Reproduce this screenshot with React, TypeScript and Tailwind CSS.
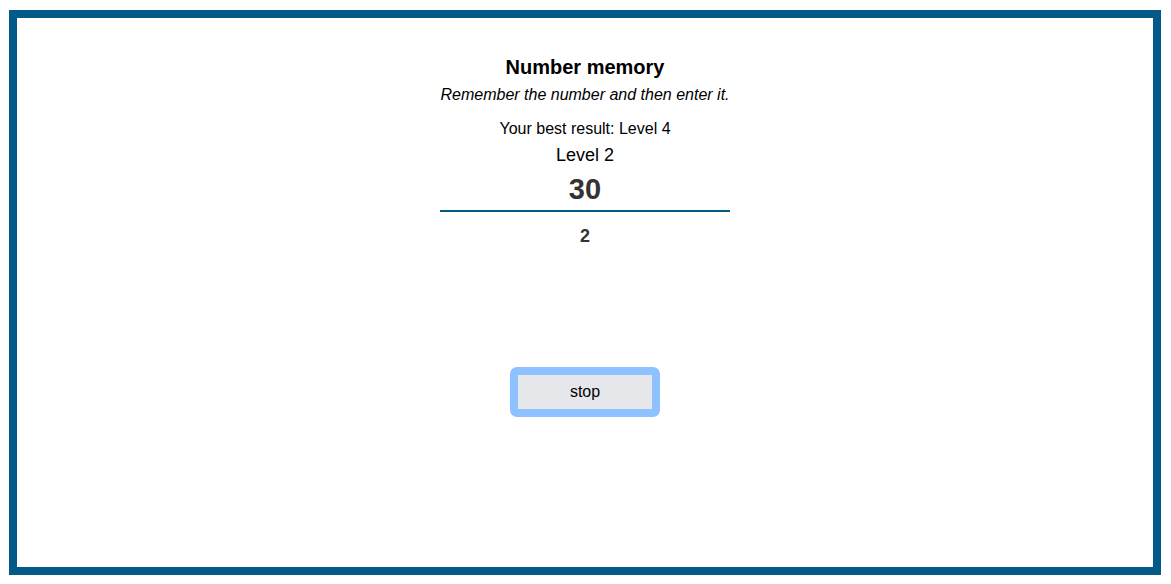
export default function App() {
  return (
    <div className="w-[1171px] h-[584px] bg-white pt-[10px] pl-[9px]" style={{ fontFamily: '"Liberation Sans", Arial, sans-serif' }}>
      <div className="w-[1152px] h-[565px] border-[8px] border-[#035a89] flex flex-col items-center pt-[37px]">
        <h1 className="text-[20px] leading-[24px] font-bold text-black">Number memory</h1>
        <p className="mt-[6px] text-[16px] leading-[19px] italic text-black">Remember the number and then enter it.</p>
        <p className="mt-[15px] text-[16px] leading-[19px] text-black">Your best result: Level 4</p>
        <p className="mt-[7px] text-[18px] leading-[21px] text-black">Level 2</p>
        <div className="mt-[7px] w-[290px] border-b-2 border-[#035a89] pb-[5px] text-center text-[29px] leading-[32px] font-bold text-[#333333]">30</div>
        <div className="mt-[13px] text-[18px] leading-[22px] font-bold text-[#333333]">2</div>
        <button className="mt-[120px] w-[150px] h-[50px] rounded-[7px] border-[8px] border-[#8ec1ff] bg-[#e5e7eb] text-[16px] leading-[18px] text-black">
          stop
        </button>
      </div>
    </div>
  );
}
